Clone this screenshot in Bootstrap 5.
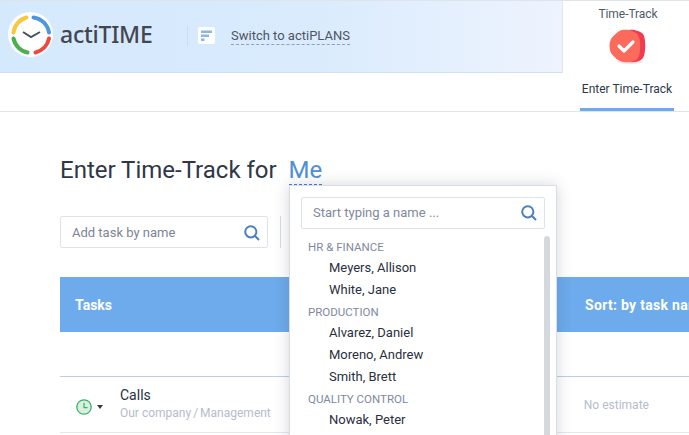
<!DOCTYPE html>
<html lang="en">
<head>
<meta charset="utf-8">
<title>actiTIME</title>
<link href="https://cdn.jsdelivr.net/npm/bootstrap@5.3.0/dist/css/bootstrap.min.css" rel="stylesheet">
<style>
html,body{height:435px;overflow:hidden;background:#fff}
body{font-family:Roboto,"Liberation Sans",sans-serif;color:#29303e;font-size:13px;position:relative;line-height:1.2}
.top-band{height:73px;border-top:1px solid #dfe3ea}
.brand-band{width:563px;background:linear-gradient(90deg,#d5e9fd 0%,#d9ebfd 55%,#eef3fe 100%);border-bottom:1px solid #cfe0f2;border-right:1px solid #dce8f8;padding-left:8px;padding-bottom:4px}
.logo-mark{width:45px;height:45px;flex:none}
.logo-word{font-family:"Noto Sans","DejaVu Sans",sans-serif;font-weight:500;font-size:23px;color:#43464f;margin-left:7px;width:127px;letter-spacing:-.25px}
.band-sep{width:1px;height:20px;background:#c7def5;margin-right:10px;margin-top:2px}
.plans-ico{width:17px;height:17px;background:#fff;border-radius:2px;margin-right:16px;margin-top:1px}
.plans-link{color:#4e5564;border-bottom:1px dashed #8a9fc0;font-size:13px;line-height:14px;padding-bottom:1px;margin-top:5px}
.track-cell{width:126px;padding:6px 0 0 4px;color:#4e5a6b;font-size:12px;letter-spacing:-.05px}
.track-ico{margin-top:8px;display:block}
.sub-band{height:39px;border-bottom:1px solid #dfe3ea}
.sub-tab{width:94px;margin-left:580px;height:38px;border-bottom:3px solid #6fa9ea;font-size:12px;color:#2f3747;padding-top:9px;text-align:center;white-space:nowrap}
.main-area{padding-left:60px}
.page-title{font-size:24px;font-weight:400;color:#2f3747;margin:0;padding-top:44px;line-height:28px;height:72px}
.who-link{color:#4d8fd8;border-bottom:1px dashed #4d7fc0;display:inline-block;line-height:27px;height:28px;margin-left:6px}
.tool-row{margin-top:32px;height:32px}
.find-box{width:208px;height:32px;border:1px solid #dfe2e8;border-radius:2px;padding:1px 7px 0 11px;color:#7d8494;font-size:13px}
.tool-sep{width:1px;height:32px;background:#d9dde3;margin-left:12px}
.tbl-head{height:55px;margin-top:29px;background:#6dabec;color:#fff;font-weight:700;font-size:14px;padding:2px 0 0 15px}
.sort-cell{margin-left:473px;white-space:nowrap;letter-spacing:.3px}
.gap-row{height:45px;border-bottom:1px solid #b9d0ea}
.task-row{height:56px;border-bottom:1px solid #e3e8f0}
.clock-cell{width:60px;padding-left:16px;padding-top:5px}
.caret-mark{width:0;height:0;border-left:3px solid transparent;border-right:3px solid transparent;border-top:4px solid #333a48;margin-left:5px}
.task-name{font-size:14px;line-height:17px;color:#29303e;margin-top:-2px}
.task-path{font-size:12px;color:#b4bccd;line-height:15px;margin-top:2px}
.path-cut{margin:0 2px}
.est-cell{margin-left:313px;color:#b4bccd;font-size:12px;padding-top:1px}
.pop-panel{position:absolute;left:289px;top:185px;width:268px;height:260px;background:#fff;border:1px solid #d9dde3;box-shadow:0 0 14px rgba(60,70,90,.22);padding:11px 11px 0}
.pop-find{height:32px;border:1px solid #dfe2e8;border-radius:2px;padding:0 7px 0 11px;color:#8089a0;font-size:13px}
.pop-bar{position:absolute;left:254px;top:50px;width:6px;height:210px;background:#d5d9de;border-radius:3px}
.pop-list{padding-left:7px;margin-top:8px}
.pop-group{font-size:11.500px;color:#8089a0;line-height:20px;height:20px;text-transform:uppercase;margin-top:1px}
.pop-person{font-size:13px;line-height:22px;height:22px;padding-left:21px;color:#29303e}
</style>
</head>
<body>
<div class="top-band d-flex">
  <div class="brand-band d-flex align-items-center">
    <svg class="logo-mark" viewBox="0 0 45 45">
      <circle cx="22.5" cy="22.5" r="22.5" fill="#fff"/>
      <g fill="none" stroke-width="4" stroke-linecap="round">
        <path d="M5 20 A18 18 0 0 1 18 5" stroke="#f8c83c" transform="translate(.5 .5)"/>
        <path d="M25 5 A18 18 0 0 1 40.500 20" stroke="#4f96e0" transform="translate(.5 .5)"/>
        <path d="M40.500 26 A18 18 0 0 1 27 40" stroke="#ea4a3f" transform="translate(.5 .5)"/>
        <path d="M19 40 A18 18 0 0 1 5 26" stroke="#4caf50" transform="translate(.5 .5)"/>
      </g>
      <path d="M15 20 L23 25 L32 20" fill="none" stroke="#4a5060" stroke-width="2"/>
    </svg>
    <div class="logo-word">actiTIME</div>
    <div class="band-sep"></div>
    <svg class="plans-ico" viewBox="0 0 17 17">
      <rect x="3" y="3.500" width="11" height="2.500" fill="#8fb4e3"/>
      <rect x="3" y="7.500" width="8" height="2.500" fill="#8fb4e3"/>
      <rect x="3" y="11.500" width="3.500" height="2.500" fill="#8fb4e3"/>
    </svg>
    <div class="plans-link">Switch to actiPLANS</div>
  </div>
  <div class="track-cell d-flex flex-column align-items-center">
    <div>Time-Track</div>
    <svg class="track-ico" width="38" height="36" viewBox="0 0 38 36">
      <ellipse cx="21" cy="33" rx="13" ry="2" fill="#f3e9ea"/>
      <path d="M20 1 C24 0 31 2 34 5 C37 9 37 24 34 29 C31 33 25 34 20 33 Z" fill="#f23a50"/>
      <path d="M13 1 C19 0 26 2 29 6 C32 11 32 24 29 29 C26 33 19 34 14 33 C9 32 5 28 2 24 C0 20 0 14 2 10 C5 6 9 2 13 1 Z" fill="#fb6a5a"/>
      <path d="M10 17 L15 22 L24 13" fill="none" stroke="#fff" stroke-width="3.200" stroke-linecap="round" stroke-linejoin="round"/>
    </svg>
  </div>
</div>
<div class="sub-band"><div class="sub-tab">Enter Time-Track</div></div>
<div class="main-area">
  <h1 class="page-title">Enter Time-Track for <span class="who-link">Me</span></h1>
  <div class="tool-row d-flex">
    <div class="find-box d-flex align-items-center justify-content-between">
      <span>Add task by name</span>
      <svg width="16" height="16" viewBox="0 0 16 16" fill="none" stroke="#4a80bf" stroke-width="2"><circle cx="6.800" cy="6.800" r="5.600"/><path d="M10.800 10.800 L15 15"/></svg>
    </div>
    <div class="tool-sep"></div>
  </div>
  <div class="tbl-head d-flex align-items-center">
    <div>Tasks</div>
    <div class="sort-cell">Sort: by task name</div>
  </div>
  <div class="gap-row"></div>
  <div class="task-row d-flex align-items-center">
    <div class="clock-cell d-flex align-items-center">
      <svg width="16" height="16" viewBox="0 0 16 16"><circle cx="8" cy="8" r="7.200" fill="#d6f2de" stroke="#3fae6a" stroke-width="1.300"/><path d="M8 3.800 V8.600 H11.600" fill="none" stroke="#3fae6a" stroke-width="1.200"/></svg>
      <div class="caret-mark"></div>
    </div>
    <div>
      <div class="task-name">Calls</div>
      <div class="task-path">Our company<span class="path-cut">/</span>Management</div>
    </div>
    <div class="est-cell">No estimate</div>
  </div>
</div>
<div class="pop-panel">
  <div class="pop-find d-flex align-items-center justify-content-between">
    <span>Start typing a name ...</span>
    <svg width="16" height="16" viewBox="0 0 16 16" fill="none" stroke="#4a80bf" stroke-width="2"><circle cx="6.800" cy="6.800" r="5.600"/><path d="M10.800 10.800 L15 15"/></svg>
  </div>
  <div class="pop-bar"></div>
  <div class="pop-list">
    <div class="pop-group">HR &amp; Finance</div>
    <div class="pop-person">Meyers, Allison</div>
    <div class="pop-person">White, Jane</div>
    <div class="pop-group">Production</div>
    <div class="pop-person">Alvarez, Daniel</div>
    <div class="pop-person">Moreno, Andrew</div>
    <div class="pop-person">Smith, Brett</div>
    <div class="pop-group">Quality Control</div>
    <div class="pop-person">Nowak, Peter</div>
  </div>
</div>
<script src="https://cdn.jsdelivr.net/npm/bootstrap@5.3.0/dist/js/bootstrap.bundle.min.js"></script>
</body>
</html>
